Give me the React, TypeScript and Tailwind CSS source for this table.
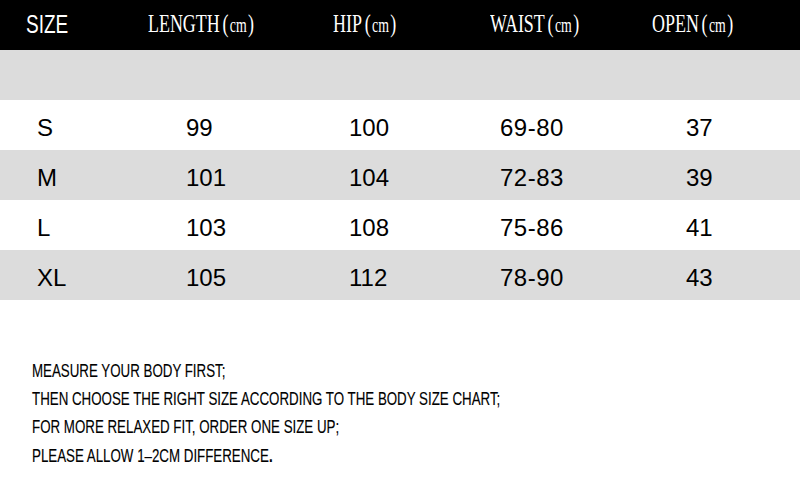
import React from "react";

const rows = [
  ["S", "99", "100", "69-80", "37"],
  ["M", "101", "104", "72-83", "39"],
  ["L", "103", "108", "75-86", "41"],
  ["XL", "105", "112", "78-90", "43"],
];

function Head({ label }: { label: string }) {
  return (
    <span
      className="inline-block origin-left scale-x-[0.69] whitespace-nowrap text-[26px] leading-none text-white"
      style={{ fontFamily: '"Liberation Serif", serif' }}
    >
      {label}
      <span className="ml-[4px]">(</span>
      <span className="mx-[2px] text-[20px]">cm</span>)
    </span>
  );
}

export default function App() {
  const sans = { fontFamily: '"Liberation Sans", Arial, sans-serif' };
  return (
    <div className="h-[500px] w-[800px] overflow-hidden bg-white" style={sans}>
      <div className="flex h-[50px] items-center bg-black">
        <div className="w-[148px] pl-[26px]">
          <span className="inline-block origin-left scale-x-[0.73] text-[26px] leading-none text-white">SIZE</span>
        </div>
        <div className="w-[185px]"><Head label="LENGTH" /></div>
        <div className="w-[157px]"><Head label="HIP" /></div>
        <div className="w-[162px]"><Head label="WAIST" /></div>
        <div className="flex-1"><Head label="OPEN" /></div>
      </div>
      <div className="h-[50px] bg-[#dcdcdc]" />
      {rows.map((r, i) => (
        <div
          key={r[0]}
          className={`flex h-[50px] items-center pt-[6px] text-[24px] leading-none text-black ${i % 2 === 1 ? "bg-[#dcdcdc]" : "bg-white"}`}
        >
          <div className="w-[186px] pl-[37px]">{r[0]}</div>
          <div className="w-[163px]">{r[1]}</div>
          <div className="w-[151px]">{r[2]}</div>
          <div className="w-[186px] tracking-[0.5px]">{r[3]}</div>
          <div className="flex-1">{r[4]}</div>
        </div>
      ))}
      <div className="mt-[57px] pl-[32px] text-[18px] leading-[28px] text-black [-webkit-text-stroke:0.15px_black]">
        <div className="origin-left scale-x-[0.74] whitespace-nowrap">MEASURE YOUR BODY FIRST;</div>
        <div className="origin-left scale-x-[0.74] whitespace-nowrap">THEN CHOOSE THE RIGHT SIZE ACCORDING TO THE BODY SIZE CHART;</div>
        <div className="origin-left scale-x-[0.74] whitespace-nowrap">FOR MORE RELAXED FIT, ORDER ONE SIZE UP;</div>
        <div className="mt-[1px] origin-left scale-x-[0.74] whitespace-nowrap">PLEASE ALLOW 1–2CM DIFFERENCE<b>.</b></div>
      </div>
    </div>
  );
}
